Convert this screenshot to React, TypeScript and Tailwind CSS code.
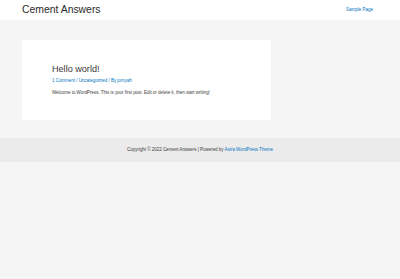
export default function App() {
  return (
    <div className="min-h-screen bg-[#f5f5f5] font-['Liberation_Sans',Arial,sans-serif] text-[#3a3a3a]">
      <header className="h-[20px] bg-white flex items-center justify-between pl-[22px] pr-[27px]">
        <span className="text-[10.4px] leading-none text-[#2a2a2a]">Cement Answers</span>
        <nav className="flex text-[4.5px] leading-none">
          <a className="text-[#0274be]">Sample Page</a>
        </nav>
      </header>

      <main className="pt-[20px] pb-[18px] px-[22px]">
        <article className="w-[249px] h-[80px] bg-white pt-[23px] px-[30px]">
          <h2 className="text-[9.1px] leading-[12px] text-[#3a3a3a]">Hello world!</h2>
          <div className="text-[4.45px] leading-[6px] text-[#0274be] mt-[3px]">
            1 Comment / Uncategorized / By jomyah
          </div>
          <p className="text-[4.45px] leading-[6px] mt-[6px]">
            Welcome to WordPress. This is your first post. Edit or delete it, then start writing!
          </p>
        </article>
      </main>

      <footer className="h-[24px] bg-[#ebebeb] flex items-center justify-center text-[4.45px] leading-none text-[#3a3a3a]">
        <span>
          Copyright © 2022 Cement Answers | Powered by{" "}
          <a className="text-[#0274be]">Astra WordPress Theme</a>
        </span>
      </footer>
    </div>
  );
}
